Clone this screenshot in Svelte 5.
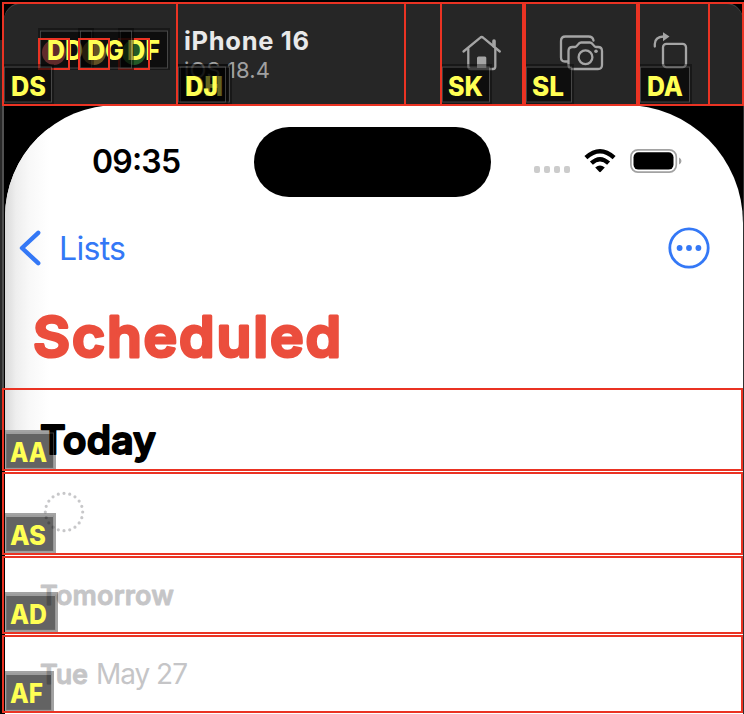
<script>
  const frames = [
    { x: 2, y: 2, w: 176, h: 104 },
    { x: 176, y: 2, w: 230, h: 104 },
    { x: 404, y: 2, w: 38, h: 104 },
    { x: 440, y: 2, w: 84, h: 104 },
    { x: 524, y: 2, w: 114, h: 104 },
    { x: 638, y: 2, w: 72, h: 104 },
    { x: 708, y: 2, w: 36, h: 104 },
    { x: 2, y: 388, w: 741, h: 83 },
    { x: 2, y: 472, w: 741, h: 83 },
    { x: 2, y: 556, w: 741, h: 78 },
    { x: 2, y: 635, w: 741, h: 78 }
  ];
  // Drawn in order, so the middle hint covers the edges of its neighbours.
  const small = [
    { t: 'DF', x: 118, y: 28, w: 52, h: 42, tx: 9, tw: 33, ty: 32 },
    { t: 'DD', x: 38, y: 28, w: 56, h: 42, tx: 9, tw: 36, ty: 32 },
    { t: 'DG', x: 78, y: 28, w: 56, h: 42, tx: 9, tw: 37, ty: 32 }
  ];
  const tags = [
    { t: 'DS', x: 2, y: 64, w: 52, h: 40, tx: 9, tw: 35, ty: 32 },
    { t: 'DH', x: 178, y: 64, w: 54, h: 40, tx: 8, tw: 37, ty: 32 },
    { t: 'DJ', x: 176, y: 64, w: 52, h: 40, tx: 9, tw: 33, ty: 32 },
    { t: 'SK', x: 440, y: 64, w: 52, h: 40, tx: 8, tw: 35, ty: 32 },
    { t: 'SL', x: 524, y: 64, w: 50, h: 40, tx: 8, tw: 32, ty: 32 },
    { t: 'DA', x: 638, y: 64, w: 54, h: 40, tx: 9, tw: 36, ty: 32 },
    { t: 'AA', x: 4, y: 430, w: 52, h: 40, tx: 6, tw: 37, ty: 32 },
    { t: 'AS', x: 4, y: 513, w: 52, h: 40, tx: 6, tw: 36, ty: 32 },
    { t: 'AD', x: 4, y: 592, w: 54, h: 40, tx: 6, tw: 37, ty: 32 },
    { t: 'AF', x: 4, y: 671, w: 50, h: 41, tx: 6, tw: 33, ty: 32 }
  ];
</script>

{#snippet label(text, cls, w, h, base, size)}
  <svg class={cls} width={w} height={h}>
    <text x="0" y={base} font-size={size} textLength={w}>{text}</text>
  </svg>
{/snippet}

{#snippet tag(g)}
  <svg class="tag" style="left:{g.x}px;top:{g.y}px" width={g.w} height={g.h}>
    <rect width={g.w} height={g.h} fill="#000" fill-opacity=".36" />
    <rect x="2" y="4" width={g.w - 5} height={g.h - 6} fill="#000" fill-opacity=".39" />
    <rect x="2.5" y="3" width={g.w - 5} height={g.h - 5} fill="none" stroke="#888" stroke-opacity=".42" />
    <text x={g.tx} y={g.ty} textLength={g.tw} lengthAdjust="spacingAndGlyphs">{g.t}</text>
  </svg>
{/snippet}

<div class="window">
  <header>
    <div class="lights"><i class="red"></i><i class="amber"></i><i class="green"></i></div>
    <div class="device">
      {@render label('iPhone 16', 'name', 125, 30, 23, 25.5)}
      {@render label('iOS 18.4', 'os', 86, 26, 23, 22)}
    </div>
    <svg class="tools" width="230" height="46" viewBox="460 28 230 46">
      <path d="M463.5 51.5 L480 37.8 Q481.7 36.3 483.4 37.8 L499.8 51.5" />
      <path d="M468.3 49 V66.5 Q468.3 69 471 69 H493 Q495.3 69 495.3 66.5 V49" />
      <path d="M494 41 V46" stroke-width="3.6" />
      <path class="solid" d="M477 69 V58 Q477 56.5 478.5 56.5 H485 Q486.3 56.5 486.3 58 V69 Z" />
      <path d="M568 61.5 H565 Q561 61.5 561 57.5 V41 Q561 36.5 565.5 36.5 H588.5 Q592.8 36.5 593.5 40.5" />
      <path d="M572.5 47 H575 C577.5 47 578 42.5 581 42.5 H590 C593 42.5 593.5 47 596 47 H598 Q602 47 602 51 V65 Q602 69 598 69 H572.5 Q568.5 69 568.5 65 V51 Q568.5 47 572.5 47 Z" />
      <circle cx="585.5" cy="57.3" r="6.9" />
      <circle class="solid" cx="596" cy="51.3" r="1.8" />
      <rect x="663" y="43.8" width="23" height="23.5" rx="3.5" />
      <path d="M654.8 46.5 V44 Q655 37 663.5 36.5" />
      <path class="solid" d="M663 32.2 L669.5 36.5 L663 41.2 Z" />
    </svg>
  </header>

  <main>
    <div class="shade"></div>
    <div class="status">
      {@render label('09:35', 'clock', 89, 36, 31, 32)}
      <div class="island"></div>
      <div class="signal"><i></i><i></i><i></i><i></i></div>
      <svg class="wifi" width="32" height="24" viewBox="0 0 32 24">
        <path d="M1.9 8.6 Q16 -4.2 30.1 8.6" />
        <path d="M7.4 14.2 Q16 6.2 24.6 14.2" />
        <path class="tip" d="M11.2 18.5 Q16 14.6 20.8 18.5 L16.8 22.8 Q16 23.5 15.2 22.8 Z" />
      </svg>
      <svg class="battery" width="52" height="24" viewBox="0 0 52 24">
        <rect x=".9" y=".9" width="45.4" height="22.2" rx="7" fill="none" stroke="#a2a2a2" stroke-width="1.7" />
        <rect x="3.5" y="3.2" width="40" height="17.4" rx="5" />
        <path d="M49 8.5 Q51.5 9.5 51.5 12 Q51.5 14.5 49 15.5 Z" fill="#a2a2a2" />
      </svg>
    </div>

    <nav>
      <svg class="back" width="26" height="40" viewBox="0 0 26 40"><path d="M19.2 4.8 L3 20 L19.2 35.2" /></svg>
      {@render label('Lists', 'lists', 67, 40, 32, 32)}
      <svg class="more" width="42" height="42" viewBox="0 0 42 42">
        <circle class="ring" cx="21" cy="21" r="19.2" />
        <circle cx="11.6" cy="21" r="2.9" /><circle cx="21" cy="21" r="2.9" /><circle cx="30.4" cy="21" r="2.9" />
      </svg>
    </nav>

    <h1>{@render label('Scheduled', 'title', 308, 60, 49, 57)}</h1>

    <section class="today">{@render label('Today', 'head', 116, 46, 34.5, 39)}</section>
    <section class="blank">
      <svg width="42" height="42" viewBox="0 0 42 42">
        <circle cx="21" cy="21" r="18.7" pathLength="200" />
      </svg>
    </section>
    <section class="tomorrow">{@render label('Tomorrow', 'sub', 134, 34, 24, 27)}</section>
    <section class="tue">
      {@render label('Tue', 'sub', 48, 34, 24, 27)}
      {@render label('May 27', 'sub light', 92, 34, 24, 28)}
    </section>
  </main>

  <div class="overlay">
    {#each small as g}
      <div class="frame" style="left:{g.x}px;top:38px;width:32px;height:32px"></div>
      {@render tag(g)}
    {/each}
    <div class="frame dot" style="left:38px"></div>
    <div class="frame dot" style="left:78px"></div>
    {#each tags as g}
      {@render tag(g)}
    {/each}
    {#each frames as f}
      <div class="frame" style="left:{f.x}px;top:{f.y}px;width:{f.w}px;height:{f.h}px"></div>
    {/each}
    <div class="half"></div>
  </div>
</div>

<style>
  .window {
    position: relative;
    box-sizing: border-box;
    width: 744px;
    height: 714px;
    overflow: hidden;
    padding: 3px 1px 0 4px;
    background:
      linear-gradient(#505050, #505050) 2px 20px / 2px 410px no-repeat,
      linear-gradient(#292929, #292929) 0 40px / 2px 390px no-repeat,
      linear-gradient(#303030, #303030) 743px 20px / 1px 694px no-repeat,
      #000;
    font-family: Inter, "Liberation Sans", sans-serif;
  }
  svg { display: block; flex: none; overflow: visible; }
  header {
    display: flex;
    height: 102px;
    background: #262626;
    border-radius: 17px 17px 0 0;
    box-shadow: inset 0 1px #444;
  }
  .lights { display: flex; gap: 16px; width: 180px; padding: 37px 0 0 38px; box-sizing: border-box; }
  .lights i { width: 24px; height: 25px; border-radius: 50%; }
  .red { background: #f87070; }
  .amber { background: #ffd060; }
  .green { background: #5fe866; }
  .device { width: 276px; padding-top: 24px; }
  .name { fill: #e9e9e9; font-weight: 700; }
  .os { fill: #a0a0a0; margin-top: -2px; }
  .tools { margin-top: 25px; fill: none; stroke: #a5a5a5; stroke-width: 2.3; stroke-linecap: round; stroke-linejoin: round; }
  .solid { fill: #a5a5a5; stroke: none; }

  main {
    position: relative;
    display: flex;
    flex-direction: column;
    height: 609px;
    margin-left: 1px;
    overflow: hidden;
    background: #fff;
    border-radius: 112px 118px 0 0;
  }
  .shade {
    position: absolute;
    left: 0;
    top: 0;
    width: 44px;
    height: 325px;
    background: linear-gradient(90deg, #d9d9d9, #eee 25%, #f8f8f8 55%, #fff);
  }
  .status, nav { position: relative; display: flex; flex: none; box-sizing: border-box; }
  .status { height: 92px; padding-left: 87px; }
  .clock { margin-top: 37px; font-weight: 570; }
  .island { width: 237px; height: 70px; margin: 22px 0 0 73px; border-radius: 35px; background: #000; }
  .signal { display: flex; gap: 4px; margin: 61px 0 0 43px; }
  .signal i { width: 6px; height: 7px; border-radius: 2px; background: #ccc; }
  .wifi { margin: 44px 0 0 14px; fill: none; stroke: #000; stroke-width: 4.4; }
  .tip { fill: #000; stroke: none; }
  .battery { margin: 44px 0 0 14px; }
  nav { height: 101px; padding: 30px 33.5px 0 14px; }
  .back { margin-top: 1px; fill: none; stroke: #3478f6; stroke-width: 4.4; stroke-linecap: round; stroke-linejoin: round; }
  .lists { margin: 1px 0 0 14px; fill: #3478f6; }
  .more { margin: 0 0 0 auto; fill: #3478f6; }
  .ring { fill: none; stroke: #3478f6; stroke-width: 2.8; }
  h1 { position: relative; flex: none; height: 90px; margin: 0; padding: 10px 0 0 28px; box-sizing: border-box; }
  .title { fill: #eb4e3d; stroke: #eb4e3d; stroke-width: 3; stroke-linejoin: round; font-weight: 580; }
  section { position: relative; flex: none; box-sizing: border-box; padding-left: 35px; }
  .today { height: 84px; padding-top: 31px; }
  .head { stroke: #000; stroke-width: 1.8; stroke-linejoin: round; font-weight: 580; }
  .blank { height: 84px; padding: 18.5px 0 0 38px; }
  .blank circle { fill: none; stroke: #c7c7c9; stroke-width: 3.2; stroke-linecap: round; stroke-dasharray: 0 10; }
  .tomorrow { height: 79px; padding-top: 25px; }
  .tue { display: flex; gap: 8px; height: 79px; padding-top: 25px; }
  .sub { fill: #c5c5c7; stroke: #c5c5c7; stroke-width: .8; stroke-linejoin: round; font-weight: 600; }
  .light { stroke: none; font-weight: 400; }

  .overlay { position: absolute; inset: 0; }
  .tag { position: absolute; fill: #ffff54; font-size: 26.5px; font-weight: 800; }
  .frame { position: absolute; box-sizing: border-box; border: 2px solid #ea3323; }
  .dot { top: 38px; width: 32px; height: 32px; }
  .half {
    position: absolute;
    left: 134px;
    top: 38px;
    width: 16px;
    height: 32px;
    box-sizing: border-box;
    border: solid #ea3323;
    border-width: 2px 2px 2px 0;
  }
</style>
